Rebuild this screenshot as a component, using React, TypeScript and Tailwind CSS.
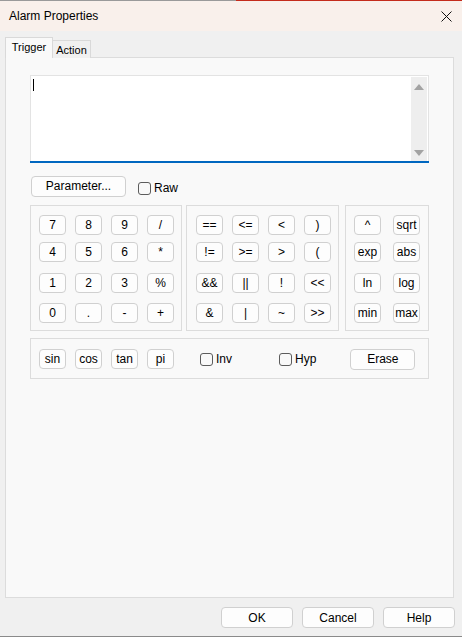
import React from "react";

const font = { fontFamily: '"Liberation Sans", Arial, sans-serif' };

function Btn({ label, w = "w-[27px]", cls = "" }: { label: string; w?: string; cls?: string }) {
  return (
    <div
      className={`${w} h-[20px] shrink-0 flex items-center justify-center rounded-[4px] border border-[#d0d0d0] bg-[#fdfdfd] text-[12px] leading-none text-black ${cls}`}
    >
      {label}
    </div>
  );
}

function Check({ label }: { label: string }) {
  return (
    <div className="flex items-center gap-[3px] text-[12px] text-black">
      <div className="w-[13px] h-[13px] rounded-[3px] border border-[#5c5c5c] bg-[#f9f9f9]" />
      <span>{label}</span>
    </div>
  );
}

function Grid({ rows, gapX }: { rows: string[][]; gapX: string }) {
  return (
    <div className="flex flex-col">
      {rows.map((r, i) => (
        <div key={i} className={`flex ${gapX} ${i === 1 ? "mt-[7px]" : i === 2 ? "mt-[11px]" : i === 3 ? "mt-[10px]" : ""}`}>
          {r.map((l, j) => (
            <Btn key={j} label={l} />
          ))}
        </div>
      ))}
    </div>
  );
}

export default function App() {
  return (
    <div className="w-[462px] h-[637px] bg-[#f0f0f0] relative overflow-hidden flex flex-col" style={font}>
      {/* title bar */}
      <div className="h-[31px] shrink-0 bg-[#f9f0eb] flex items-center justify-between pl-[9px] pr-[10px] relative border-t border-[#9a9a9a]">
        <div className="absolute top-[-1px] left-[236px] right-0 h-[1px] bg-[#c42b1c]" />
        <span className="text-[12px] text-black">Alarm Properties</span>
        <svg width="11" height="11" viewBox="0 0 11 11" className="mt-[1px]">
          <path d="M0.5 0.5 L10.5 10.5 M10.5 0.5 L0.5 10.5" stroke="#111" strokeWidth="1" />
        </svg>
      </div>

      {/* tabs */}
      <div className="flex items-end pl-[5px] mt-[6px] h-[21px] shrink-0 relative z-10">
        <div className="w-[48px] h-[21px] bg-[#f9f9f9] border border-b-0 border-[#d9d9d9] flex items-center justify-center text-[11px] text-black pb-[1px]">
          Trigger
        </div>
        <div className="w-[38px] h-[18px] bg-[#f0f0f0] border border-l-0 border-b-0 border-[#d9d9d9] flex items-center justify-center text-[11px] text-black pt-[1px]">
          Action
        </div>
      </div>

      {/* panel */}
      <div className="ml-[5px] w-[449px] h-[541px] -mt-[1px] bg-[#f9f9f9] border border-[#dcdcdc] pl-[24px] pt-[17px] flex flex-col">
        {/* text area */}
        <div className="w-[399px] h-[88px] bg-white border border-b-0 border-[#e3e3e3] flex flex-col">
          <div className="flex-1 flex">
            <div className="flex-1 relative">
              <div className="absolute left-[2px] top-[3px] w-[1px] h-[12px] bg-black" />
            </div>
            <div className="w-[16px] mt-[1px] mr-[1px] bg-[#eeeeee] flex flex-col items-center justify-between pt-[7px] pb-[5px]">
              <svg width="10" height="6" viewBox="0 0 10 6">
                <path d="M0 6 L5 0 L10 6 Z" fill="#a3a3a3" />
              </svg>
              <svg width="10" height="6" viewBox="0 0 10 6">
                <path d="M0 0 L10 0 L5 6 Z" fill="#a3a3a3" />
              </svg>
            </div>
          </div>
          <div className="h-[2px] bg-[#0067c0] -mx-[1px]" />
        </div>

        {/* parameter row */}
        <div className="flex items-center mt-[12px] ml-[1px]">
          <Btn label="Parameter..." w="w-[95px]" cls="h-[21px]" />
          <div className="ml-[12px] mt-[4px]">
            <Check label="Raw" />
          </div>
        </div>

        {/* groups */}
        <div className="flex mt-[8px]">
          <div className="w-[152px] h-[126px] border border-[#dcdcdc] pl-[8px] pt-[9px]">
            <Grid
              gapX="gap-[9px]"
              rows={[
                ["7", "8", "9", "/"],
                ["4", "5", "6", "*"],
                ["1", "2", "3", "%"],
                ["0", ".", "-", "+"],
              ]}
            />
          </div>
          <div className="w-[153px] h-[126px] ml-[4px] border border-[#dcdcdc] pl-[9px] pt-[9px]">
            <Grid
              gapX="gap-[9px]"
              rows={[
                ["==", "<=", "<", ")"],
                ["!=", ">=", ">", "("],
                ["&&", "||", "!", "<<"],
                ["&", "|", "~", ">>"],
              ]}
            />
          </div>
          <div className="w-[84px] h-[126px] ml-[6px] border border-[#dcdcdc] pl-[8px] pt-[9px]">
            <Grid
              gapX="gap-[12px]"
              rows={[
                ["^", "sqrt"],
                ["exp", "abs"],
                ["ln", "log"],
                ["min", "max"],
              ]}
            />
          </div>
        </div>

        {/* bottom group */}
        <div className="w-[399px] h-[41px] mt-[7px] border border-[#dcdcdc] pl-[8px] pt-[1px] flex items-center">
          <div className="flex gap-[9px]">
            <Btn label="sin" />
            <Btn label="cos" />
            <Btn label="tan" />
            <Btn label="pi" />
          </div>
          <div className="ml-[26px]">
            <Check label="Inv" />
          </div>
          <div className="ml-[47px]">
            <Check label="Hyp" />
          </div>
          <Btn label="Erase" w="w-[65px]" cls="ml-[34px] h-[21px]" />
        </div>
      </div>

      {/* footer */}
      <div className="flex justify-end gap-[9px] pr-[7px] mt-[9px]">
        <Btn label="OK" w="w-[72px]" cls="h-[21px] border-[#0067c0]" />
        <Btn label="Cancel" w="w-[72px]" cls="h-[21px]" />
        <Btn label="Help" w="w-[72px]" cls="h-[21px]" />
      </div>
      <div className="absolute bottom-0 left-0 right-0 h-[1px] bg-[#8a8a8a]" />
    </div>
  );
}
